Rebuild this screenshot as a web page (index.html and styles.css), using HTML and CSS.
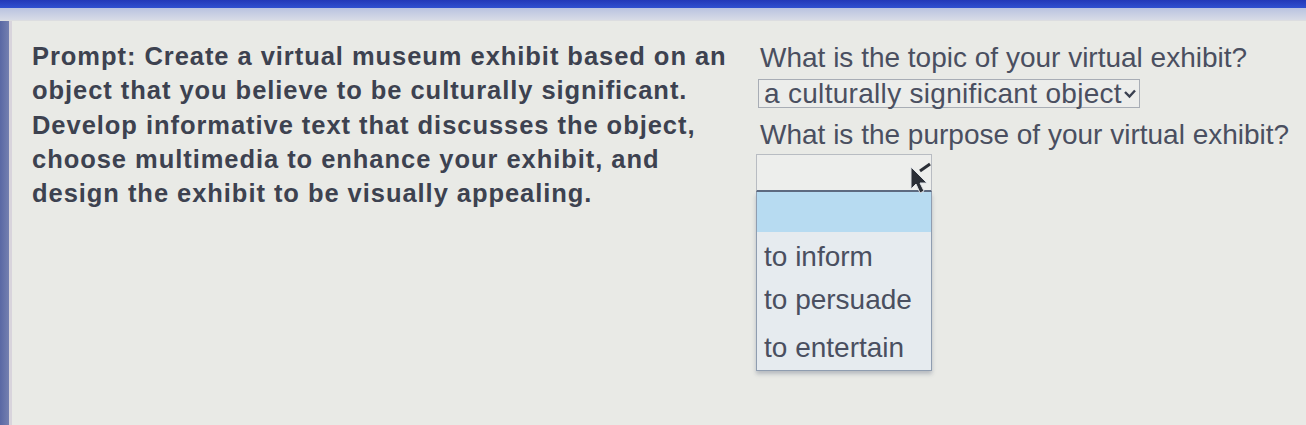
FILE: index.html
```html
<!DOCTYPE html>
<html>
<head>
<meta charset="utf-8">
<link rel="stylesheet" href="styles.css">
</head>
<body>
<div class="topbar"></div>
<div class="band"></div>
<div class="main">
  <div class="strip"></div>
  <div class="content">
    <div class="prompt">
      <div class="line">Prompt: Create a virtual museum exhibit based on an</div>
      <div class="line">object that you believe to be culturally significant.</div>
      <div class="line">Develop informative text that discusses the object,</div>
      <div class="line">choose multimedia to enhance your exhibit, and</div>
      <div class="line">design the exhibit to be visually appealing.</div>
    </div>
    <div class="questions">
      <div class="q">What is the topic of your virtual exhibit?</div>
      <div class="select1">a culturally significant object<svg class="chev" width="14" height="12" viewBox="0 0 14 12"><path d="M2 4 L6.5 8.5 L12 2.5" fill="none" stroke="#3a4050" stroke-width="2.4"/></svg></div>
      <div class="q q2">What is the purpose of your virtual exhibit?</div>
      <div class="dd">
        <div class="select2">
          <svg class="cursor" width="34" height="40" viewBox="0 0 34 40"><path d="M8 6 L8 28 L13 23 L17 32 L21 30 L17 22 L24 22 Z" fill="#2a2e36" stroke="#dfe2e6" stroke-width="1"/><path d="M17 10 L27 3" stroke="#2a2e36" stroke-width="3"/></svg>
        </div>
        <div class="list">
          <div class="opt hl"></div>
          <div class="opt">to inform</div>
          <div class="opt">to persuade</div>
          <div class="opt">to entertain</div>
        </div>
      </div>
    </div>
  </div>
</div>
</body>
</html>
```
FILE: styles.css
```css
html, body {
  margin: 0;
  padding: 0;
  width: 1306px;
  height: 425px;
  overflow: hidden;
  background: #e8e9e5;
}
.topbar {
  height: 8px;
  background: linear-gradient(#2238b8, #3050d0);
}
.band {
  height: 12px;
  background: linear-gradient(#b9c3e0, #d7dbe6);
  border-bottom: 1px solid #dcdde0;
}
.main {
  display: flex;
  height: 404px;
}
.strip {
  width: 9px;
  background: linear-gradient(90deg, #5968a4, #7480b0);
  border-right: 3px solid #d8d4dc;
}
.content {
  flex: 1;
  display: flex;
  background: #e9eae6;
}
.prompt {
  width: 728px;
  padding: 18px 0 0 20px;
  font-family: "Liberation Sans", Arial, sans-serif;
  font-weight: bold;
  font-size: 25.5px;
  line-height: 34.3px;
  color: #3d4250;
  letter-spacing: 0.95px;
  white-space: nowrap;
}
.questions {
  padding: 20px 0 0 0;
  font-family: "Liberation Sans", Arial, sans-serif;
  color: #4a4f60;
  display: flex;
  flex-direction: column;
  align-items: flex-start;
}
.q {
  font-size: 28px;
  line-height: 34px;
  letter-spacing: 0;
  white-space: nowrap;
}
.q2 { margin-top: 10px; }
.select1 {
  margin-top: 4px;
  margin-left: -2px;
  height: 27px;
  padding: 0 2px 0 5px;
  border: 1px solid #a8adb5;
  background: #ecedeb;
  font-size: 28px;
  line-height: 27px;
  letter-spacing: 0.3px;
  color: #4a4f60;
  display: flex;
  align-items: center;
  white-space: nowrap;
}
.chev { margin-left: 1px; }
.dd {
  margin-left: -4px;
  margin-top: 2px;
  width: 176px;
}
.select2 {
  position: relative;
  height: 35px;
  border: 1px solid #b8bcc2;
  border-bottom: 2px solid #5d6a80;
  background: #edeeec;
}
.cursor {
  position: absolute;
  right: -6px;
  top: 6px;
}
.list {
  border: 1px solid #8f9db0;
  border-top: none;
  background: #e6ebef;
  box-shadow: 0 3px 4px rgba(90,100,120,0.35);
  font-size: 28px;
  color: #4a4f60;
  letter-spacing: 0;
}
.opt {
  height: 46px;
  line-height: 46px;
  padding-left: 7px;
}
.opt.hl {
  height: 40px;
  background: #b7dbf1;
}
.opt:nth-child(2) { height: 45px; line-height: 50px; }
.opt:last-child { height: 47px; line-height: 50px; }
```
